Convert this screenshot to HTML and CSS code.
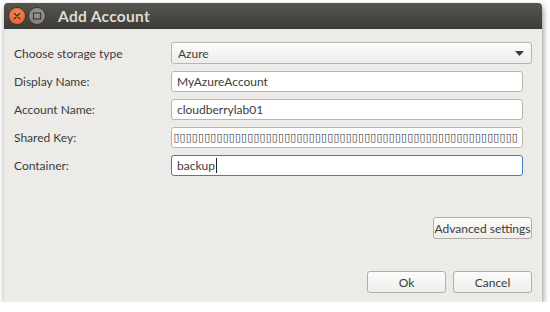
FILE: index.html
```html
<!DOCTYPE html>
<html lang="en">

<head>
    <meta charset="UTF-8">
    <meta name="viewport" content="width=device-width, initial-scale=1.0">
    <title>Add Account</title>
    <link rel="stylesheet" href="styles.css">
</head>

<body>

    <div class="window">
        <!-- Title bar with window controls -->
        <div class="titlebar">
            <span class="win-btn close">
                <svg width="16" height="16" viewBox="0 0 16 16">
                    <path d="M5.5 5.5 L10.5 10.5 M10.5 5.5 L5.5 10.5" stroke="#3a2a22" stroke-width="1.4" stroke-linecap="round" />
                </svg>
            </span>
            <span class="win-btn minimize">
                <svg width="16" height="16" viewBox="0 0 16 16">
                    <rect x="4.5" y="5" width="7" height="6" fill="none" stroke="#3c3b37" stroke-width="1.2" />
                </svg>
            </span>
            <h1>Add Account</h1>
        </div>

        <div class="content">
            <div class="form">
                <label>Choose storage type</label>
                <div class="combo">
                    <span>Azure</span>
                    <svg width="9" height="5" viewBox="0 0 9 5">
                        <path d="M0 0 L9 0 L4.5 5 Z" fill="#3c3c3c" />
                    </svg>
                </div>

                <label>Display Name:</label>
                <div class="entry">MyAzureAccount</div>

                <label>Account Name:</label>
                <div class="entry">cloudberrylab01</div>

                <label>Shared Key:</label>
                <div class="entry secret"><span>▯▯▯▯▯▯▯▯▯▯▯▯▯▯▯▯▯▯▯▯▯▯▯▯▯▯▯▯▯▯▯▯▯▯▯▯▯▯▯▯▯▯▯▯▯▯▯▯▯▯▯▯▯▯▯▯</span></div>

                <label>Container:</label>
                <div class="entry focused">backup<span class="caret"></span></div>
            </div>

            <div class="advanced-row">
                <button type="button" class="advanced">Advanced settings</button>
            </div>

            <div class="footer">
                <button type="button" class="wide">Ok</button>
                <button type="button" class="wide">Cancel</button>
            </div>
        </div>
    </div>

</body>

</html>
```

FILE: styles.css
```css
/* Basic styling */
body {
    margin: 0;
    background: #ffffff;
    font-family: Lato, "Open Sans", sans-serif;
    font-size: 12px;
    color: #3c3c3c;
}

.window {
    width: 538px;
    height: 299px;
    margin: 3px 0 0 4px;
    display: flex;
    flex-direction: column;
    background: #edebe7;
    border-radius: 4px 4px 0 0;
    box-shadow: 1px 3px 6px rgba(0, 0, 0, 0.45);
}

.titlebar {
    height: 26px;
    display: flex;
    align-items: center;
    padding-left: 5px;
    gap: 4px;
    background: linear-gradient(#57554f, #3c3b37);
    border-radius: 4px 4px 0 0;
}

.titlebar h1 {
    margin: 0 0 0 9px;
    font-size: 15.5px;
    font-weight: bold;
    color: #dfdbd2;
    letter-spacing: 0.3px;
}

.win-btn {
    width: 16px;
    height: 16px;
    border-radius: 50%;
    display: flex;
}

.close {
    background: radial-gradient(circle at 50% 35%, #f58b5a, #e1571f);
    box-shadow: 0 0 0 1px #3a3530;
}

.minimize {
    background: radial-gradient(circle at 50% 35%, #9d9a92, #7a7871);
    box-shadow: 0 0 0 1px #3a3530;
}

.content {
    flex: 1;
    display: flex;
    flex-direction: column;
    padding: 13px 10px 9px 10px;
}

.form {
    display: grid;
    grid-template-columns: 157px 1fr;
    row-gap: 7px;
    align-items: center;
}

label {
    color: #3c3c3c;
}

.combo {
    height: 20px;
    display: flex;
    align-items: center;
    justify-content: space-between;
    padding: 0 7px 0 6px;
    border: 1px solid #b9b5ad;
    border-radius: 3px;
    background: linear-gradient(#fbfbfa, #eeedeb);
}

.entry {
    height: 19px;
    margin-right: 9px;
    display: flex;
    align-items: center;
    padding: 0 5px;
    border: 1px solid #b9b5ad;
    border-radius: 3px;
    background: #ffffff;
    white-space: nowrap;
    overflow: hidden;
}

.secret {
    justify-content: flex-end;
    padding: 0 4px 0 0;
}

.secret span {
    font-family: "DejaVu Sans", sans-serif;
    font-size: 11px;
    letter-spacing: 0.1px;
}

.focused {
    border-color: #3b7fc4;
}

.caret {
    width: 1px;
    height: 15px;
    background: #222;
    margin-left: 1px;
}

button {
    font-family: inherit;
    font-size: 12px;
    color: #3c3c3c;
    height: 22px;
    padding: 0 3px;
    border: 1px solid #b2aea6;
    border-radius: 3px;
    background: linear-gradient(#fbfbfa, #efeeec);
}

.advanced-row {
    display: flex;
    justify-content: flex-end;
    margin-top: 41px;
}

.advanced {
    width: 99px;
    padding: 0;
}

.footer {
    margin-top: auto;
    display: flex;
    justify-content: flex-end;
    gap: 7px;
}

.wide {
    width: 79px;
}
```
